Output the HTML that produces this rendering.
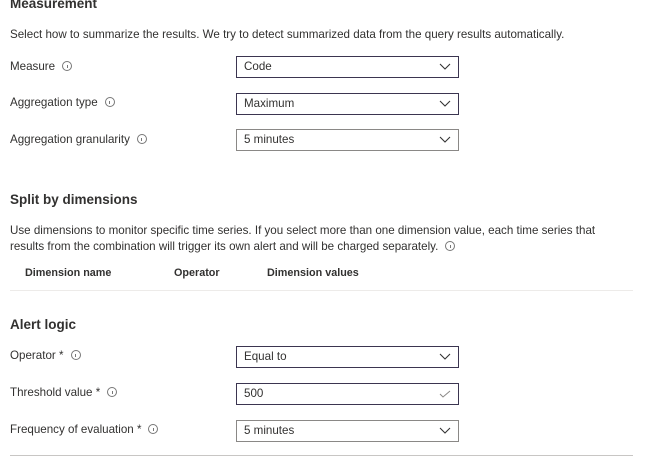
<!DOCTYPE html>
<html><head><style>
body{margin:0;width:671px;height:462px;background:#fff;font-family:"Liberation Sans",sans-serif;color:#323130;position:relative;overflow:hidden}
.a{position:absolute;white-space:nowrap}
.h{font-size:13.5px;font-weight:bold;color:#323130}
.t{font-size:11.6px}
.i{display:inline-block;width:8px;height:8px;border:1px solid #777;border-radius:50%;vertical-align:-1px;margin-left:7px;position:relative}
.i:after{content:"";position:absolute;left:3.5px;top:3px;width:1px;height:3px;background:#777}
.b{position:absolute;left:236px;width:214px;height:20px;border:1px solid #3b3550;font-size:11.6px;line-height:20px;padding-left:7px;box-sizing:content-box}
.g{border-color:#8a8886}
.b svg{position:absolute;right:7px;top:6px}
.th{font-size:10.8px;font-weight:bold}
</style></head><body>
<div class="a h" style="left:10px;top:-4px">Measurement</div>
<div class="a t" style="left:10px;top:28px">Select how to summarize the results. We try to detect summarized data from the query results automatically.</div>
<div class="a t" style="left:10px;top:60px">Measure<span class="i"></span></div>
<div class="b" style="top:56px">Code<svg width="12" height="8"><path d="M1 1l5 5 5-5" fill="none" stroke="#333" stroke-width="1.1"/></svg></div>
<div class="a t" style="left:10px;top:96px">Aggregation type<span class="i"></span></div>
<div class="b" style="top:93px">Maximum<svg width="12" height="8"><path d="M1 1l5 5 5-5" fill="none" stroke="#333" stroke-width="1.1"/></svg></div>
<div class="a t" style="left:10px;top:133px">Aggregation granularity<span class="i"></span></div>
<div class="b g" style="top:129px">5 minutes<svg width="12" height="8"><path d="M1 1l5 5 5-5" fill="none" stroke="#333" stroke-width="1.1"/></svg></div>
<div class="a h" style="left:10px;top:192px">Split by dimensions</div>
<div class="a t" style="left:10px;top:224px">Use dimensions to monitor specific time series. If you select more than one dimension value, each time series that</div>
<div class="a t" style="left:10px;top:240px">results from the combination will trigger its own alert and will be charged separately.<span class="i"></span></div>
<div class="a th" style="left:25px;top:267px">Dimension name</div>
<div class="a th" style="left:174px;top:267px">Operator</div>
<div class="a th" style="left:267px;top:267px">Dimension values</div>
<div class="a" style="left:10px;top:290px;width:623px;height:1px;background:#edebe9"></div>
<div class="a h" style="left:10px;top:317px">Alert logic</div>
<div class="a t" style="left:10px;top:349px">Operator *<span class="i"></span></div>
<div class="b" style="top:346px">Equal to<svg width="12" height="8"><path d="M1 1l5 5 5-5" fill="none" stroke="#333" stroke-width="1.1"/></svg></div>
<div class="a t" style="left:10px;top:386px">Threshold value *<span class="i"></span></div>
<div class="b" style="top:383px">500<svg width="12" height="8"><path d="M1 4l3 3 7-6" fill="none" stroke="#8a8886" stroke-width="1"/></svg></div>
<div class="a t" style="left:10px;top:423px">Frequency of evaluation *<span class="i"></span></div>
<div class="b g" style="top:420px">5 minutes<svg width="12" height="8"><path d="M1 1l5 5 5-5" fill="none" stroke="#333" stroke-width="1.1"/></svg></div>
<div class="a" style="left:10px;top:455px;width:623px;height:1px;background:#c8c6c4"></div>
</body></html>
